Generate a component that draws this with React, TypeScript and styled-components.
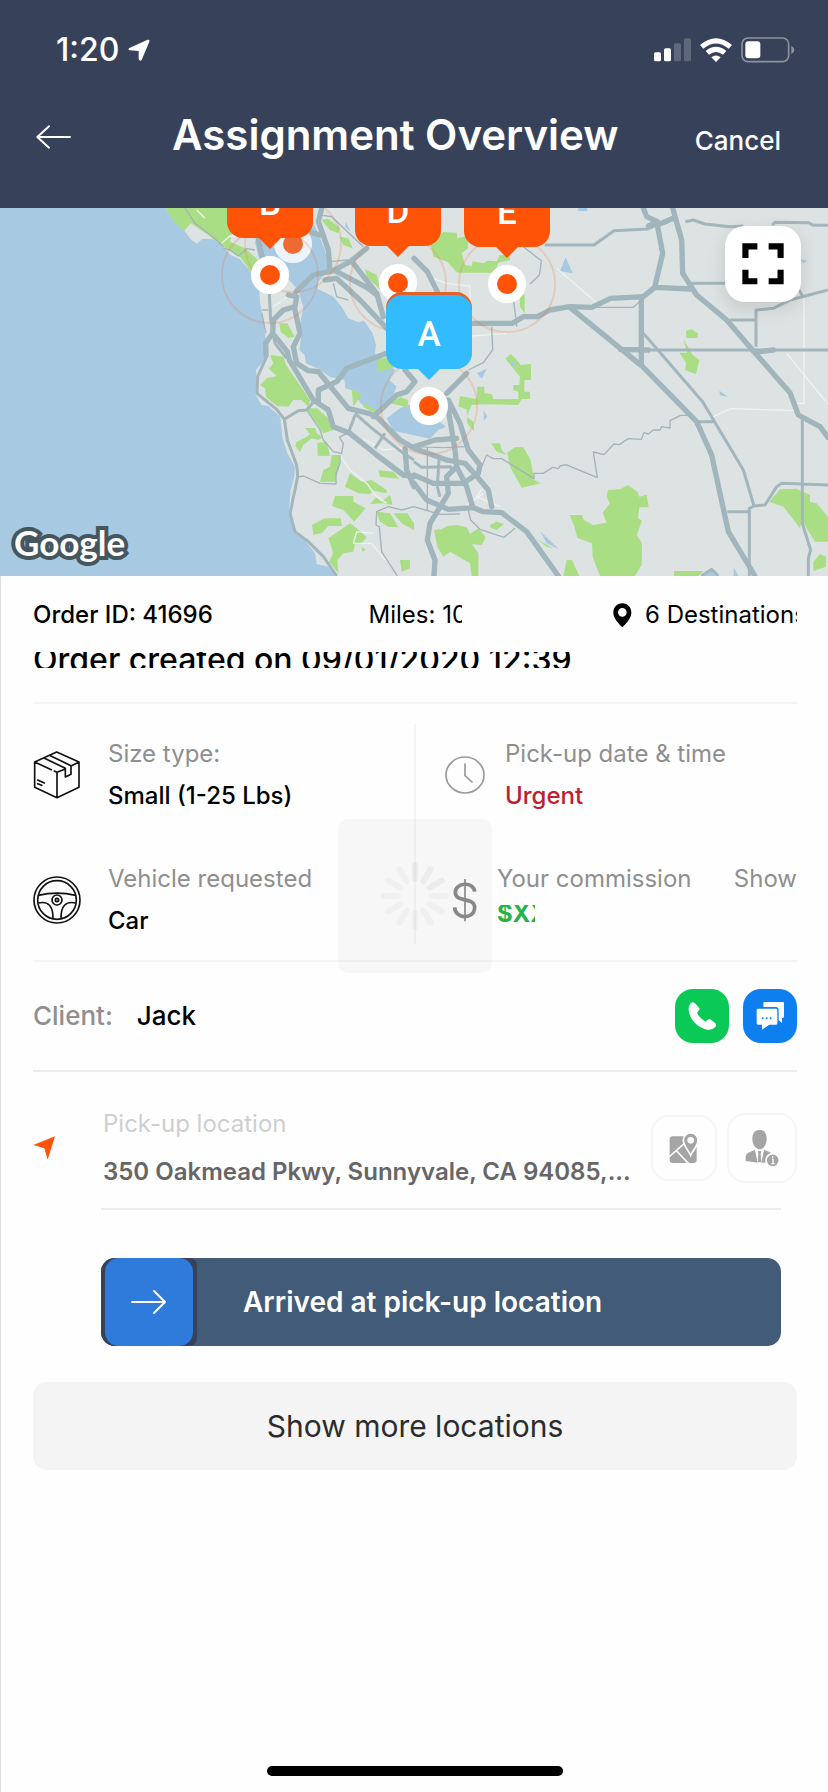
import React from "react";
import styled, { createGlobalStyle } from "styled-components";

const sans = '"Inter", "Open Sans", "Liberation Sans", sans-serif';
const navy = "#37425a";
const orange = "#ff5407";

const Global = createGlobalStyle`
  *, *::before, *::after { box-sizing: border-box; }
  body { margin: 0; background: #fefefe; font-family: ${sans}; color: #000; }
  h1, p, dl, dt, dd { margin: 0; }
  button { font: inherit; color: inherit; border: 0; padding: 0; background: none; cursor: pointer; }
  svg { display: block; flex: none; }
`;

const Screen = styled.div`
  min-height: 100vh;
  display: flex;
  flex-direction: column;
`;

const Header = styled.header`
  background: ${navy};
  color: #fff;
`;

const StatusBar = styled.div`
  display: flex;
  align-items: center;
  gap: 9px;
  height: 100px;
  padding: 0 33px 0 56px;
`;

const Clock = styled.span`
  font-size: 32px;
  font-weight: 500;
  line-height: 40px;
`;

const StatusIcons = styled.div`
  display: flex;
  align-items: center;
  gap: 9px;
  margin-left: auto;
`;

const NavBar = styled.div`
  display: grid;
  grid-template-columns: 136px 1fr auto;
  align-items: baseline;
  height: 108px;
  padding: 9px 47px 0 36px;
`;

const Title = styled.h1`
  font-size: 42px;
  font-weight: 600;
  line-height: 52px;
  white-space: nowrap;
`;

const TextButton = styled.button<{ $muted?: boolean }>`
  font-size: ${(p) => (p.$muted ? 24 : 26)}px;
  line-height: 36px;
  font-weight: ${(p) => (p.$muted ? 400 : 500)};
  color: ${(p) => (p.$muted ? "#8f8f8f" : "#fff")};
`;

const MapArea = styled.section`
  position: relative;
  height: 368px;
  overflow: hidden;
  background: #dde3e2;
`;

const MapDrawing = styled.svg`
  width: 100%;
  height: 100%;
`;

const MapLogo = styled.span`
  position: absolute;
  left: 14px;
  bottom: 12px;
  font-family: Lato, sans-serif;
  font-size: 35px;
  font-weight: 700;
  line-height: 44px;
  color: #fff;
  paint-order: stroke fill;
  -webkit-text-stroke: 8px #46565f;
`;

const FullScreen = styled.button`
  position: absolute;
  top: 18px;
  right: 27px;
  width: 76px;
  height: 76px;
  border-radius: 20px;
  background: #fff;
  box-shadow: 0 6px 18px rgba(0, 0, 0, 0.12);
  display: grid;
  place-items: center;
`;

const Pin = styled.div<{ $x: number; $y: number }>`
  position: absolute;
  left: ${(p) => p.$x - 49}px;
  top: ${(p) => p.$y - 111}px;
  width: 98px;
  height: 160px;
  display: flex;
  flex-direction: column;
  align-items: center;
`;

const Halo = styled.span`
  position: absolute;
  left: 0;
  bottom: 0;
  width: 98px;
  height: 98px;
  border-radius: 50%;
  border: 2px solid rgba(240, 110, 60, 0.2);
`;

const Callout = styled.span<{ $active?: boolean }>`
  position: relative;
  width: 86px;
  height: 74px;
  border-radius: 16px;
  background: ${(p) => (p.$active ? "#33bbff" : orange)};
  box-shadow: ${(p) => (p.$active ? "0 -3px 0 #e2622c" : "none")};
  color: #fff;
  font-family: Roboto, sans-serif;
  font-size: 35px;
  font-weight: 500;
  line-height: 80px;
  text-align: center;

  &::after {
    content: "";
    position: absolute;
    left: 31px;
    top: 73px;
    border: 12px solid transparent;
    border-bottom-width: 0;
    border-top-color: ${(p) => (p.$active ? "#33bbff" : orange)};
  }
`;

const Dot = styled.span<{ $faded?: boolean }>`
  position: relative;
  width: 38px;
  height: 38px;
  margin-top: ${(p) => (p.$faded ? 92 : 18)}px;
  border-radius: 50%;
  border: 9px solid #fff;
  background: ${orange};
  opacity: ${(p) => (p.$faded ? 0.8 : 1)};
`;

const Main = styled.main`
  flex: 1;
  display: flex;
  flex-direction: column;
  border-left: 1px solid #dedede;
  padding: 21px 31px 16px 32px;
`;

const OrderRow = styled.div`
  display: grid;
  grid-template-columns: 1fr 93px 1fr;
  font-size: 24px;
  line-height: 36px;
  white-space: nowrap;
`;

const OrderId = styled.span`
  font-weight: 500;
`;

const Clipped = styled.span`
  overflow: hidden;
`;

const Destinations = styled.span`
  display: flex;
  gap: 13px;
  align-items: center;
  justify-self: end;
  width: 184px;
  overflow: hidden;
`;

const Created = styled.p`
  height: 16px;
  margin: 19px 0 34px;
  overflow: hidden;
  font-size: 32px;
  font-weight: 500;
  line-height: 16px;
  white-space: nowrap;
`;

const Rule = styled.hr<{ $strong?: boolean; $inset?: boolean }>`
  width: auto;
  height: 2px;
  border: 0;
  margin: ${(p) => (p.$inset ? "0 16px 0 68px" : "0")};
  background: ${(p) => (p.$strong ? "#ececec" : "#f5f5f5")};
`;

const Details = styled.div`
  position: relative;
  display: grid;
  grid-template-columns: 1fr 2px 1fr;
  margin: 20px 0 16px;
`;

const Divider = styled.span`
  background: #f5f5f5;
`;

const Column = styled.dl<{ $indent?: boolean }>`
  display: flex;
  flex-direction: column;
  gap: 47px;
  padding: 12px 0 5px ${(p) => (p.$indent ? 29 : 0)}px;
`;

const Item = styled.div<{ $gap: number }>`
  display: flex;
  align-items: center;
  gap: ${(p) => p.$gap}px;
`;

const Field = styled.div`
  display: flex;
  flex-direction: column;
  gap: 6px;
  height: 78px;
  font-size: 24px;
  line-height: 36px;
  white-space: nowrap;
`;

const Label = styled.dt`
  color: #8f8f8f;
`;

const Value = styled.dd<{ $color?: string }>`
  font-weight: 500;
  color: ${(p) => p.$color ?? "#000"};
`;

const Amount = styled.dd`
  width: 38px;
  height: 17px;
  margin-top: 2px;
  overflow: hidden;
  font-weight: 700;
  line-height: 17px;
  color: #27b34b;
`;

const ShowSlot = styled.dd`
  align-self: flex-start;
  margin-left: auto;
`;

const Spinner = styled.div`
  position: absolute;
  left: 50%;
  top: 95px;
  width: 154px;
  height: 154px;
  margin-left: -77px;
  border-radius: 10px;
  background: rgba(0, 0, 0, 0.027);
  display: grid;
  place-items: center;
`;

const ClientRow = styled.div`
  display: flex;
  align-items: center;
  height: 108px;
  font-size: 26px;
  font-weight: 500;
  line-height: 36px;
`;

const ClientLabel = styled.span`
  color: #8f8f8f;
  margin-right: 24px;
`;

const ClientActions = styled.div`
  display: flex;
  gap: 14px;
  margin-left: auto;
`;

const ActionButton = styled.button<{ $bg: string }>`
  width: 54px;
  height: 54px;
  border-radius: 18px;
  background: ${(p) => p.$bg};
`;

const PickupRow = styled.div`
  display: grid;
  grid-template-columns: 70px 1fr auto;
  align-items: center;
  padding: 34px 0 18px;
`;

const PickupText = styled.div`
  display: flex;
  flex-direction: column;
  gap: 12px;
  min-width: 0;
  font-size: 24px;
  line-height: 36px;
`;

const PickupLabel = styled.span`
  color: #cfcfcf;
`;

const Address = styled.span`
  font-weight: 600;
  color: #666;
  white-space: nowrap;
`;

const PickupActions = styled.div`
  display: flex;
  align-items: center;
  gap: 10px;
`;

const OutlineButton = styled.button<{ $size: number }>`
  width: ${(p) => p.$size}px;
  height: ${(p) => p.$size}px;
  border: 2px solid #f7f7f7;
  border-radius: 18px;
  display: grid;
  place-items: center;
`;

const ArrivedButton = styled.button`
  display: flex;
  align-items: stretch;
  height: 88px;
  margin: 48px 16px 0 68px;
  border-radius: 14px;
  overflow: hidden;
  background: #415b78;
  color: #fff;
  font-size: 28px;
  font-weight: 600;
  line-height: 88px;
  text-align: left;
`;

const Thumb = styled.span`
  background: ${navy};
  border-radius: 0 8px 8px 0;
  padding: 0 4px;
  margin-right: 46px;
`;

const ThumbFace = styled.span`
  width: 88px;
  height: 88px;
  border-radius: 14px;
  background: #2f7bdb;
  display: grid;
  place-items: center;
`;

const MoreButton = styled.button`
  height: 88px;
  margin: 36px 0;
  border-radius: 14px;
  background: #f4f4f4;
  color: #2c2c2c;
  font-size: 30px;
  line-height: 36px;
`;

const HomeIndicator = styled.div`
  width: 296px;
  height: 10px;
  margin: auto auto 0;
  border-radius: 5px;
  background: #000;
`;

const pins = [
  { id: "D", x: 398, y: 75 },
  { id: "E", x: 507, y: 76 },
  { id: "B", x: 270, y: 67 },
  { id: "A", x: 429, y: 198, active: true },
];

function BayMap() {
  return (
    <MapDrawing viewBox="0 24 2484 1104" preserveAspectRatio="xMidYMid slice" aria-hidden="true">
      {/* ocean and bay */}
      <g fill="#a7cae2">
        <path d="M0 24H497L520 60 553 92 572 118 590 131 608 116 640 118 665 136 692 165 720 178 755 218 778 260 780 310 790 350 798 430 803 460 790 485 768 510 772 560 766 583 785 615 805 618 840 650 848 715 862 760 885 800 883 830 872 870 866 940 885 1000 915 1020 945 1060 950 1092 985 1100 1006 1128H0Z" />
        <path d="M765 125 800 110 860 90 930 50 950 90 975 150 988 205 955 245 952 266 1000 290 1025 320 1045 355 1075 367 1092 362 1118 400 1128 435 1125 460 1150 480 1185 510 1168 540 1190 560 1172 600 1140 635 1110 632 1080 608 1060 572 1036 565 1033 540 990 530 955 506 918 490 914 465 898 450 905 400 900 370 910 325 895 270 865 238 820 262 755 218 780 190Z" />
        <path d="M1160 655 1200 625 1242 610 1300 650 1338 680 1315 690 1290 716 1242 706 1180 692Z" />
        <path d="M1697 172 1718 220 1680 214ZM1430 520 1460 506 1446 536ZM1450 630 1462 650 1452 662ZM2158 572 2184 590 2160 586ZM1735 24H1762V33H1735ZM1038 66 1052 95 1035 80ZM2202 1104 2216 1128H2200ZM2110 1128 2130 1110 2150 1128Z" />
      </g>
      {/* parks */}
      <g fill="#a9de84">
        <path d="M497 24H745L700 80 690 125 735 145 780 185 755 218 720 170 670 140 625 105 572 70 553 92 525 70Z" />
        <path d="M965 60 985 56 1020 85 1015 100 990 90ZM1018 110 1045 115 1058 145 1030 135ZM1095 208 1130 225 1142 270 1100 230ZM838 370 862 370 884 410 865 414 842 395Z" />
        <path d="M810 465 850 470 858 495 930 600 925 620 905 600 880 600 865 620 830 618 798 590 795 565 780 556 800 535 830 528 806 506 820 490Z" />
        <path d="M920 625 950 625 985 655 1000 690 970 700 935 650ZM915 684 945 684 950 700 968 712 955 720 935 715 910 735 900 757 886 738 890 725 918 712 930 702ZM952 728 980 726 990 768 953 767ZM995 765 1018 765 1018 800 1005 845 960 846 970 810 990 800ZM1055 568 1086 582 1060 620ZM1090 610 1140 635 1125 637 1090 622ZM1132 480 1165 470 1190 500 1135 515ZM1170 610 1200 592 1225 600 1222 622Z" />
        <path d="M1050 820 1085 845 1115 840 1160 870 1160 880 1120 872 1110 882 1075 880 1035 860ZM1135 810 1180 815 1197 836 1140 830ZM1005 888H1060L1060 905 1097 925 1062 965 1030 930 996 918ZM1110 912 1130 890 1145 905 1170 885 1178 915 1150 910ZM936 975 975 955 1022 955 1026 978 985 978 965 1000 940 1004ZM985 1015 1050 970 1070 985 1100 1012 1085 1030 1065 1030 1060 1055 1030 1060 1012 1080 1015 1120 987 1085 1000 1060ZM1130 935 1170 940 1195 982 1165 980 1140 965ZM1180 940H1222L1242 970V990L1205 970ZM1200 1080H1230V1105L1205 1115ZM1085 1040 1098 1050 1087 1055Z" />
        <path d="M1290 120 1330 96 1370 98 1372 115 1402 108 1404 145 1385 160 1395 195 1415 198 1418 184 1450 190 1462 182 1490 184 1500 165 1530 165 1530 180 1495 188 1484 218 1372 218 1342 185 1300 170ZM1560 290 1574 282 1574 340 1560 320Z" />
        <path d="M1516 476 1532 462 1546 475 1562 495 1593 492 1593 540 1573 540 1573 575 1590 575 1590 597 1565 597 1555 615 1450 613 1415 615 1400 650 1420 665 1422 694 1402 670 1400 628 1375 620 1380 588 1430 597 1432 560 1453 560 1453 580 1475 582 1480 597 1555 597 1555 575 1540 570 1540 555 1558 555 1560 530Z" />
        <path d="M1474 730H1500L1505 750 1520 765 1490 755ZM1522 758 1545 741 1570 742 1592 780 1602 840 1623 850 1565 863 1530 800ZM2058 392 2075 388 2094 400 2092 414H2059ZM2050 416 2078 465 2098 480 2088 522 2055 510 2058 488 2038 458 2062 458Z" />
        <path d="M1708 945H1745L1752 960 1780 975 1820 968 1808 938 1830 910 1820 890 1824 870 1860 868 1884 855 1912 875 1918 890 1940 884 1946 922 1918 922 1914 955 1926 962 1910 1005 1926 1030 1925 1095 1905 1128H1800L1778 1070 1776 1030 1732 1013 1722 975ZM1690 1128 1700 1080 1716 1080 1738 1128ZM2022 1113H2110L2095 1128H2022ZM2308 905 2340 868 2390 866 2430 885 2430 905 2450 910 2484 950V1025L2445 1025 2405 960 2400 985 2350 920ZM2440 1085 2460 1062 2478 1070V1100L2440 1113Z" />
        <path d="M1302 990 1325 988 1340 978 1370 975 1400 982 1410 1002 1435 985 1457 1012 1445 1035 1415 1032 1435 1060V1128H1415L1410 1090 1350 1055 1330 1070 1312 1040ZM1470 975 1490 965 1512 972 1490 990 1472 984ZM1610 1018 1660 1045 1640 1040Z" />
      </g>
      <g fill="#a7cae2">
        <path d="M1528 473 1555 503 1535 495ZM1620 993 1677 1048 1640 1030ZM2400 178 2422 182 2410 190Z" />
      </g>
      {/* minor white roads */}
      <g fill="none" stroke="#eef1f1" strokeWidth="4">
        <path d="M665 130 690 108 735 110M590 30 615 55M820 320 850 300 870 285M1022 770 1050 810 1100 850 1130 890 1160 910M1060 1030 1070 995 1120 1000M1090 715 1150 750 1200 745 1300 740M1060 1030 1115 1030 1155 1080M1670 205 1790 308M1415 408 1520 400M2140 650 2192 626 2400 632M2412 290V610H2390M2360 460 2484 612M1460 850 1430 890 1500 920M1300 235 1340 250 1410 258V300M1400 915 1450 880" />
      </g>
      {/* secondary roads */}
      <g fill="none" stroke="#a3b4ba" strokeWidth="4" strokeLinejoin="round">
        <path d="M555 24 585 70 640 112 670 140M670 145 690 150 715 168 740 146 765 150M787 330H805M785 340 798 400M920 630 960 690 970 720 1000 755 1025 760 1030 730 1018 712 1040 700M890 832 910 828 960 850 1008 852 1008 820 1020 790 1020 765M1192 1128 1145 1055 1138 980 1128 975 1130 935 1165 920 1205 930 1242 920 1320 943 1380 942M1475 380 1478 450 1450 488 1405 510M1540 295 1548 360 1550 380M1570 140 1624 182 1618 225 1590 252M1780 322H1900L1925 300M1405 930 1412 960 1440 988 1512 1012 1545 985M1445 800 1460 765 1480 776 1505 776 1602 836V820L1630 820 1658 802 1675 806 1680 798 1698 794 1792 833 1780 756 1812 764 1842 732 1858 734 1885 716 1924 718 1932 698 1945 702 1960 690 1980 690 1985 680 2010 684V662L2042 646 2062 646M1242 740 1330 743 1395 740M1282 740V930M1000 250 1010 290 1045 300M960 45 995 50 1090 140M990 185 1045 180" />
      </g>
      <g fill="none" stroke="#a3b6bd" strokeWidth="9" strokeLinejoin="round">
        <path d="M808 280 812 360 825 430 860 475M802 465 773 530 771 580 830 628 853 658 862 720 890 795 893 830 870 940 885 995 925 1025 970 1070 1010 1128M853 658 895 632 920 630 945 600M1065 640 1110 680 1210 760 1242 780M1045 700 1065 645M1125 745 1155 700M1634 135H1782L1842 92 1942 87 1970 75M2056 65 2080 60 2115 72 2190 80 2230 78M2316 75 2325 67 2425 68 2440 76H2484M2075 250H2200M1940 450H2484M1930 400 2108 605 2230 810 2262 918 2295 915 2330 860 2345 850 2484 855M2407 650V970L2432 1050 2425 1075V1128M2090 665H2140M2182 935H2250M2248 1128V925L2262 918M2268 440V330L2320 325 2370 300 2484 270M2395 265 2408 290M2190 360H2268M2104 1128 2135 1108 2155 1128M1317 780 1312 860 1320 890M1242 785 1265 802 1350 800 1365 815" />
      </g>
      {/* highways */}
      <g fill="none" stroke="#a1b5bc" strokeWidth="16" strokeLinejoin="round" strokeLinecap="round">
        <path d="M775 120 785 165 810 210M965 24 955 65 985 150 990 210M925 95 960 105M888 275 940 225 1000 212 1050 185 1100 145M975 240 1010 235 1080 300 1165 390M1060 190 1130 280 1150 350M1010 215 1100 262 1130 285M865 285 890 290 885 320 850 330 820 360 818 400 862 455 868 480 940 600 985 630 1000 680 1050 700 1130 765 1210 825 1242 830M885 330 900 400 880 440 890 490 925 512 955 515 1045 625 1125 645 1200 720 1242 745 1340 780M798 465 797 430 818 400M955 605 955 570 1010 545 1040 505 1160 460M1215 745 1220 810 1242 860M1120 650 1190 585 1220 575 1245 545 1215 510M1242 175 1282 215 1312 275" />
        <path d="M1410 370H1537L1570 350H1612L1650 330 1710 320 1775 322 1832 295 1930 290 1964 262 1988 160 1972 75 2020 55M1930 24 1940 50 1972 65 1945 78M2018 24 2045 120 2048 220 2090 285 2180 360 2262 455 2370 578 2395 645 2460 680 2484 712M1964 262 2072 267M1710 322 1928 500 2090 665 2135 765 2185 995 2265 1128M1924 290V490M1862 448 1945 450M2270 456 2320 450M1242 740 1305 720 1370 715M1340 600 1365 750 1370 800 1340 830 1345 880 1290 970 1282 1020 1305 1080 1302 1128M1345 600 1380 670 1405 750 1440 795 1435 820 1390 850 1300 850 1242 825M1340 580 1400 520M1242 850 1280 900 1345 928 1420 923 1450 935 1505 938 1580 995 1675 1128M1340 780 1395 790 1440 840 1465 870 1475 920M1370 800 1400 860 1418 920" />
      </g>
    </MapDrawing>
  );
}

function App() {
  return (
    <Screen>
      <Global />
      <Header>
        <StatusBar>
          <Clock>1:20</Clock>
          <svg width="22" height="22" viewBox="386 117 64 64" fill="#fff" aria-hidden="true">
            <path d="M390 143 443 119Q450 118 448 125L426 177Q421 184 417 176V152L392 150Q384 148 390 143Z" />
          </svg>
          <StatusIcons>
            <svg width="37" height="24" viewBox="717 113 111 72" fill="#fff" aria-hidden="true">
              <rect x="717" y="156" width="21" height="27" rx="5" />
              <rect x="747" y="144" width="21" height="39" rx="5" />
              <rect x="777" y="129" width="21" height="54" rx="5" opacity=".2" />
              <rect x="807" y="114" width="21" height="69" rx="5" opacity=".2" />
            </svg>
            <svg width="32" height="24" viewBox="857 111 96 72" fill="#fff" aria-hidden="true">
              <path d="M857 132Q905 91 953 132L943 143Q905 112 867 143Z" />
              <path d="M874 150Q905 125 936 150L926 161Q905 145 884 161Z" />
              <path d="M891 169Q905 158 919 169L905 183Z" />
            </svg>
            <svg width="54" height="26" viewBox="980 110 162 78" aria-hidden="true">
              <rect x="983" y="113" width="140" height="71" rx="18" fill="none" stroke="#8c939f" strokeWidth="5" />
              <rect x="993" y="123" width="45" height="51" rx="9" fill="#fff" />
              <path d="M1131 136Q1140 142 1140 149T1131 162Z" fill="#8c939f" />
            </svg>
          </StatusIcons>
        </StatusBar>
        <NavBar>
          <button aria-label="Back">
            <svg width="36" height="26" viewBox="108 375 108 78" fill="none" stroke="#fff" strokeWidth="6" strokeLinecap="round" strokeLinejoin="round" aria-hidden="true">
              <path d="M210 414H112M147 382 112 414 147 446" />
            </svg>
          </button>
          <Title>Assignment Overview</Title>
          <TextButton>Cancel</TextButton>
        </NavBar>
      </Header>

      <MapArea aria-label="Route map">
        <BayMap />
        <Pin $x={293} $y={36}>
          <Halo />
          <Dot $faded />
        </Pin>
        {pins.map((p) => (
          <Pin key={p.id} $x={p.x} $y={p.y}>
            <Halo />
            <Callout $active={p.active}>{p.id}</Callout>
            <Dot />
          </Pin>
        ))}
        <MapLogo>Google</MapLogo>
        <FullScreen aria-label="Full screen map">
          <svg width="42" height="42" viewBox="986 131 123 123" fill="none" stroke="#000" strokeWidth="18" aria-hidden="true">
            <path d="M1031 141H996V175M1064 141H1099V175M1031 243H996V209M1064 243H1099V209" />
          </svg>
        </FullScreen>
      </MapArea>

      <Main>
        <OrderRow>
          <OrderId>Order ID: 41696</OrderId>
          <Clipped>Miles: 100</Clipped>
          <Destinations>
            <svg width="19" height="25" viewBox="597 65 57 75" aria-hidden="true">
              <path fillRule="evenodd" d="M625 66C609 66 598 78 598 94C598 112 615 127 625 138C635 127 652 112 652 94C652 78 641 66 625 66ZM625 80A13 13 0 1 1 625 106A13 13 0 1 1 625 80Z" />
            </svg>
            6 Destinations
          </Destinations>
        </OrderRow>
        <Created>Order created on 09/01/2020 12:39</Created>
        <Rule />

        <Details>
          <Column>
            <Item $gap={27}>
              <svg width="48" height="48" viewBox="100 510 144 144" fill="none" stroke="#111" strokeWidth="5" strokeLinejoin="round" strokeLinecap="round" aria-hidden="true">
                <path d="M171 513 238 543V619L172 650 105 619V543ZM105 543 155 566M164 570 172 574 195 565M214 555 238 543M172 574V650M133 531 197 562V588L214 580V554L149 523M114 597 134 606M114 608 126 613" />
              </svg>
              <Field>
                <Label>Size type:</Label>
                <Value>Small (1-25 Lbs)</Value>
              </Field>
            </Item>
            <Item $gap={27}>
              <svg width="48" height="48" viewBox="99 887 144 144" fill="none" stroke="#111" strokeWidth="5" aria-hidden="true">
                <circle cx="171" cy="959" r="69" />
                <circle cx="171" cy="959" r="58" />
                <circle cx="171" cy="959" r="15" />
                <circle cx="171" cy="959" r="5" />
                <path d="M115 945Q171 932 227 945M115 968Q160 958 159 1015M227 968Q182 958 183 1015" />
              </svg>
              <Field>
                <Label>Vehicle requested</Label>
                <Value>Car</Value>
              </Field>
            </Item>
          </Column>
          <Divider />
          <Column $indent>
            <Item $gap={20}>
              <svg width="40" height="40" viewBox="93 518 120 120" fill="none" stroke="#999" strokeWidth="5" strokeLinecap="round" aria-hidden="true">
                <ellipse cx="153" cy="578" rx="57" ry="54" />
                <path d="M153 545V580L174 599" />
              </svg>
              <Field>
                <Label>Pick-up date &amp; time</Label>
                <Value $color="#bf2030">Urgent</Value>
              </Field>
            </Item>
            <Item $gap={12}>
              <svg width="40" height="44" viewBox="93 890 120 132" fill="none" stroke="#8c8c8c" aria-hidden="true">
                <path d="M182 931C180 900 123 902 124 934C126 967 183 944 182 980C180 1016 123 1014 122 978" strokeWidth="11" />
                <path d="M153 893V1020" strokeWidth="5" />
              </svg>
              <Field>
                <Label>Your commission</Label>
                <Amount>$XXX</Amount>
              </Field>
              <ShowSlot>
                <TextButton $muted>Show</TextButton>
              </ShowSlot>
            </Item>
          </Column>
          <Spinner role="status" aria-label="Loading">
            <svg width="70" height="70" viewBox="-35 -35 70 70" stroke="#000" strokeWidth="6" strokeLinecap="round" aria-hidden="true">
              {Array.from({ length: 12 }, (_, i) => (
                <path key={i} d="M0 -17V-31" transform={`rotate(${i * 30})`} opacity={i < 3 ? 0.04 : 0.022} />
              ))}
            </svg>
          </Spinner>
        </Details>
        <Rule />

        <ClientRow>
          <ClientLabel>Client:</ClientLabel>
          <span>Jack</span>
          <ClientActions>
            <ActionButton $bg="#0bc956" aria-label="Call client">
              <svg width="54" height="54" viewBox="783 84 162 162" fill="#fff" aria-hidden="true">
                <path d="M832 125Q838 121 843 127L855 140Q859 146 853 150L849 155Q856 171 875 182L881 176Q886 172 891 176L904 187Q909 193 903 199Q896 208 880 206C850 200 826 174 824 147Q823 132 832 125Z" />
              </svg>
            </ActionButton>
            <ActionButton $bg="#0d7fee" aria-label="Message client">
              <svg width="54" height="54" viewBox="987 84 162 162" fill="#fff" aria-hidden="true">
                <path d="M1052 123H1107Q1110 123 1110 127V167Q1110 171 1106 171H1104V186L1094 178V147Q1094 138 1085 138H1048V127Q1048 123 1052 123Z" />
                <path d="M1032 143H1086Q1090 143 1090 147V187Q1090 191 1086 191H1066L1044 206V191H1032Q1028 191 1028 187V147Q1028 143 1032 143Z" />
                <g fill="#0d7fee">
                  <circle cx="1046" cy="172" r="3" />
                  <circle cx="1058" cy="172" r="3" />
                  <circle cx="1070" cy="172" r="3" />
                </g>
              </svg>
            </ActionButton>
          </ClientActions>
        </ClientRow>
        <Rule $strong />

        <PickupRow>
          <svg width="22" height="24" viewBox="99 527 66 72" fill={orange} aria-hidden="true">
            <path d="M165 528 143 598 133 564 100 554Z" />
          </svg>
          <PickupText>
            <PickupLabel>Pick-up location</PickupLabel>
            <Address>350 Oakmead Pkwy, Sunnyvale, CA 94085,...</Address>
          </PickupText>
          <PickupActions>
            <OutlineButton $size={66} aria-label="Open in maps">
              <svg width="30" height="30" viewBox="769 510 90 90" aria-hidden="true">
                <rect x="771" y="520" width="81" height="80" rx="9" fill="#a5a5a5" />
                <path d="M769 582 815 541M792 564 828 602" stroke="#fff" strokeWidth="5" fill="none" />
                <path d="M834 510C820 510 812 521 812 532C812 549 828 563 834 577C840 563 856 549 856 532C856 521 848 510 834 510Z" fill="#a5a5a5" stroke="#fff" strokeWidth="5" />
                <circle cx="834" cy="532" r="10" fill="#fff" />
              </svg>
            </OutlineButton>
            <OutlineButton $size={70} aria-label="Contact details">
              <svg width="36" height="38" viewBox="995 507 108 114" fill="#a5a5a5" aria-hidden="true">
                <path d="M1042 510C1056 510 1063 520 1063 537C1063 555 1052 568 1042 568S1020 555 1020 537C1020 520 1028 510 1042 510Z" />
                <path d="M1028 569 1036 608H1047L1055 569 1080 580Q1086 586 1084 606Q1042 612 1000 603V590Q1000 582 1008 578Z" />
                <path d="M1029 569 1037 606 1039 584 1035 574H1047L1043 584 1046 606 1054 569Z" fill="#fff" />
                <path d="M1036 573H1047L1045 581 1047 606H1036L1038 581Z" />
                <circle cx="1081" cy="601" r="20" stroke="#fff" strokeWidth="5" />
                <path d="M1081 589V593M1079 598H1082V611M1077 611H1087" stroke="#fff" strokeWidth="4" fill="none" />
              </svg>
            </OutlineButton>
          </PickupActions>
        </PickupRow>
        <Rule $strong $inset />

        <ArrivedButton>
          <Thumb>
            <ThumbFace>
              <svg width="36" height="26" viewBox="0 0 36 26" fill="none" stroke="#fff" strokeWidth="2" strokeLinecap="round" strokeLinejoin="round" aria-hidden="true">
                <path d="M1 13H34M23 2 34 13 23 24" />
              </svg>
            </ThumbFace>
          </Thumb>
          Arrived at pick-up location
        </ArrivedButton>
        <MoreButton>Show more locations</MoreButton>
        <HomeIndicator />
      </Main>
    </Screen>
  );
}

export default App;
